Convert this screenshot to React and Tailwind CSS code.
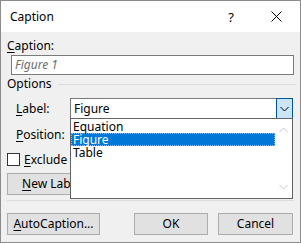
import React from 'react';

const Chevron = ({ up = false, color = '#000' }) => (
  <svg width="9" height="6" viewBox="0 0 9 6" fill="none">
    <polyline
      points={up ? '0.5,5 4.5,1 8.5,5' : '0.5,1 4.5,5 8.5,1'}
      stroke={color}
      strokeWidth="1"
    />
  </svg>
);

const Btn = ({ children, className }) => (
  <div className={`h-[22px] bg-[#e1e1e1] border border-[#adadad] flex items-center justify-center whitespace-nowrap ${className}`}>
    {children}
  </div>
);

export default function App() {
  return (
    <div className="relative w-[301px] h-[243px] overflow-hidden bg-[#f0f0f0] border border-[#8c8c8c] text-[12px] leading-[16px] text-black font-['Noto_Sans',sans-serif]">
      {/* title bar */}
      <div className="h-[31px] bg-white flex items-center pl-[9px]">
        <span>Caption</span>
        <span className="ml-auto text-[13px]">?</span>
        <svg className="ml-[37px] mr-[18px]" width="11" height="11" viewBox="0 0 11 11">
          <path d="M0.5 0.5 L10.5 10.5 M10.5 0.5 L0.5 10.5" stroke="#000" strokeWidth="1" />
        </svg>
      </div>

      <div className="pt-[6px]">
        <div className="ml-[6px] h-[16px]">
          <span className="underline underline-offset-2">C</span>aption:
        </div>
        <div className="mt-[1px] ml-[10px] w-[283px] h-[20px] bg-white border border-[#7a7a7a] pl-[3px] flex items-center italic text-[#6d6d6d]">
          Figure 1
        </div>

        <div className="mt-[1px] ml-[6px] h-[16px] flex items-center">
          <span>Options</span>
          <div className="ml-[6px] w-[238px] h-px bg-[#dcdcdc]" />
        </div>

        <div className="mt-[6px] pl-[15px] flex items-center h-[21px]">
          <span className="w-[54px]">
            <span className="underline underline-offset-2">L</span>abel:
          </span>
          <div className="relative w-[223px] h-[21px] bg-white border border-[#7a7a7a] pl-[3px] flex items-center">
            Figure
            <div className="absolute -right-px -top-px w-[17px] h-[21px] bg-[#cce4f7] border border-[#005499] flex items-center justify-center">
              <Chevron />
            </div>
          </div>
        </div>

        <div className="mt-[5px] pl-[15px] flex items-center h-[21px]">
          <span>
            <span className="underline underline-offset-2">P</span>osition:
          </span>
        </div>

        <div className="mt-[8px] ml-[6px] flex items-center h-[13px]">
          <div className="w-[13px] h-[13px] shrink-0 bg-white border border-[#333]" />
          <span className="ml-[4px] w-[45px] overflow-hidden whitespace-nowrap">
            <span className="underline underline-offset-2">E</span>xclude label from caption
          </span>
        </div>

        <Btn className="mt-[7px] ml-[6px] w-[63px] justify-start pl-[14px] overflow-hidden border-r-0">
          <span>
            <span className="underline underline-offset-2">N</span>ew Label...
          </span>
        </Btn>

        <div className="mt-[5px] ml-[6px] w-[287px] h-px bg-[#dcdcdc]" />

        <div className="mt-[12px] ml-[6px] flex items-center">
          <Btn className="w-[93px]">
            <span>
              <span className="underline underline-offset-2">A</span>utoCaption...
            </span>
          </Btn>
          <Btn className="ml-[34px] w-[74px]">OK</Btn>
          <Btn className="ml-[10px] w-[75px]">Cancel</Btn>
        </div>
      </div>

      {/* open dropdown list */}
      <div className="absolute left-[69px] top-[117px] w-[223px] h-[81px] bg-white border border-[#646464] flex">
        <div className="flex-1 pt-[1px] leading-[13px]">
          <div className="h-[13px] pl-[2px]">Equation</div>
          <div className="h-[13px] pl-[1px] bg-[#0078d7] text-white border border-dotted border-[#7fbfff] leading-[11px]">
            Figure
          </div>
          <div className="h-[13px] pl-[2px]">Table</div>
        </div>
        <div className="w-[17px] flex flex-col items-center justify-between py-[8px]">
          <Chevron up color="#c8c8c8" />
          <Chevron color="#c8c8c8" />
        </div>
      </div>
    </div>
  );
}
